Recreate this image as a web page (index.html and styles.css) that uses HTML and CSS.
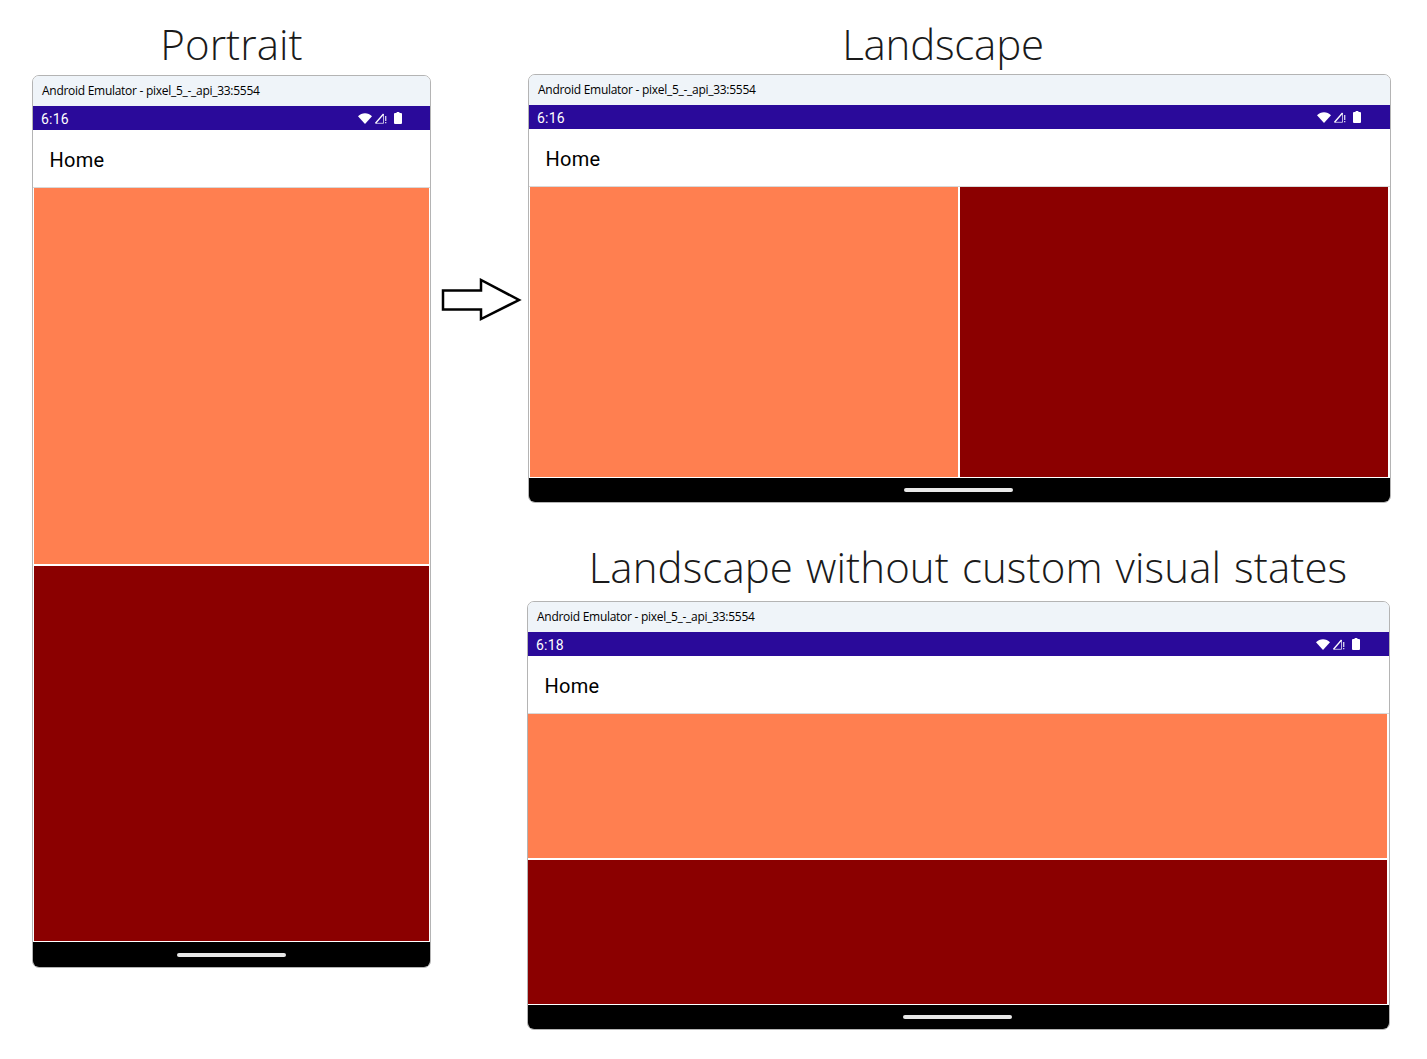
FILE: index.html
```html
<!DOCTYPE html>
<html lang="en">
<head>
    <meta charset="UTF-8">
    <title>Portrait and landscape layouts</title>
    <link rel="stylesheet" href="styles.css">
</head>
<body>

<svg class="icon-sprite" width="0" height="0">
    <symbol id="wifi" viewBox="0 0 14 11"><path d="M0 3.2C2 1.2 4.400.2 7 .2s5 1 7 3L7 11z" fill="#fff"/></symbol>
    <symbol id="signal" viewBox="0 0 12 12"><path d="M.5 11.200 8.500 2" fill="none" stroke="#fff" stroke-width="1.300"/><path d="M.5 11.300H8.500V2" fill="none" stroke="#fff" stroke-width=".7"/><path d="M10.200 4h1.100v5h-1.100zM10.200 10h1.100v1.300h-1.100z" fill="#fff"/></symbol>
    <symbol id="battery" viewBox="0 0 8 12"><path d="M2.600 0h2.800v1H7a1 1 0 0 1 1 1v9a1 1 0 0 1-1 1H1a1 1 0 0 1-1-1V2a1 1 0 0 1 1-1h1.600z" fill="#fff"/></symbol>
</svg>

<div class="page">
    <div class="column column-portrait">
        <h1 class="heading">Portrait</h1>
        <div class="window window-portrait">
            <div class="title-bar">Android Emulator - pixel_5_-_api_33:5554</div>
            <div class="status-bar">
                <span>6:16</span>
                <div class="status-icons">
                    <svg class="icon-wifi"><use href="#wifi"/></svg>
                    <svg class="icon-signal"><use href="#signal"/></svg>
                    <svg class="icon-battery"><use href="#battery"/></svg>
                </div>
            </div>
            <div class="app-bar">Home</div>
            <div class="content content-stacked">
                <div class="panel-orange"></div>
                <div class="panel-red"></div>
            </div>
            <div class="nav-bar"><div class="home-pill"></div></div>
        </div>
    </div>

    <svg class="arrow" width="82" height="44" viewBox="0 0 82 44">
        <path d="M2 12.500H40V2L78 22 40 41V31.500H2z" fill="#fff" stroke="#000" stroke-width="2.500"/>
    </svg>

    <div class="column column-landscape">
        <h1 class="heading heading-landscape">Landscape</h1>
        <div class="window window-landscape window-offset">
            <div class="title-bar">Android Emulator - pixel_5_-_api_33:5554</div>
            <div class="status-bar">
                <span>6:16</span>
                <div class="status-icons">
                    <svg class="icon-wifi"><use href="#wifi"/></svg>
                    <svg class="icon-signal"><use href="#signal"/></svg>
                    <svg class="icon-battery"><use href="#battery"/></svg>
                </div>
            </div>
            <div class="app-bar">Home</div>
            <div class="content content-split">
                <div class="panel-orange"></div>
                <div class="panel-red"></div>
            </div>
            <div class="nav-bar"><div class="home-pill"></div></div>
        </div>

        <h1 class="heading heading-plain">Landscape without custom visual states</h1>
        <div class="window window-landscape">
            <div class="title-bar">Android Emulator - pixel_5_-_api_33:5554</div>
            <div class="status-bar">
                <span>6:18</span>
                <div class="status-icons">
                    <svg class="icon-wifi"><use href="#wifi"/></svg>
                    <svg class="icon-signal"><use href="#signal"/></svg>
                    <svg class="icon-battery"><use href="#battery"/></svg>
                </div>
            </div>
            <div class="app-bar">Home</div>
            <div class="content content-stacked content-flush">
                <div class="panel-orange"></div>
                <div class="panel-red"></div>
            </div>
            <div class="nav-bar"><div class="home-pill"></div></div>
        </div>
    </div>
</div>

</body>
</html>
```

FILE: styles.css
```css
body {
    margin: 0;
    background-color: #fff;
    font-family: "Noto Sans", Arial, sans-serif;
    color: #000;
}
.icon-sprite {
    display: block;
}
.page {
    display: flex;
    align-items: flex-start;
    padding-left: 32px;
    height: 1059px;
    box-sizing: border-box;
}
.column {
    display: flex;
    flex-direction: column;
}
.column-portrait {
    width: 399px;
}
.column-landscape {
    width: 864px;
}
.heading {
    margin: 0;
    height: 75px;
    box-sizing: border-box;
    padding-top: 16px;
    font-family: "Open Sans", sans-serif;
    font-weight: 300;
    font-size: 42px;
    line-height: 56px;
    letter-spacing: .1px;
    word-spacing: 2px;
    text-align: center;
    color: #1a1a1a;
}
.heading-landscape {
    height: 74px;
    padding-right: 32px;
    padding-top: 16px;
    letter-spacing: -.2px;
}
.heading-plain {
    height: 98px;
    padding-top: 36px;
    padding-left: 18px;
}
.arrow {
    flex: none;
    margin: 278px 4px 0 10px;
}
.window {
    display: flex;
    flex-direction: column;
    box-sizing: border-box;
    border: 1px solid #b4b4b4;
    border-radius: 7px;
    overflow: hidden;
    background-color: #fff;
}
.window-portrait {
    height: 893px;
}
.window-landscape {
    width: 863px;
    height: 429px;
}
.window-offset {
    margin-left: 1px;
}
.title-bar {
    flex: none;
    height: 30px;
    padding-left: 9px;
    background-color: #eff4f9;
    font-family: "Open Sans", sans-serif;
    font-size: 12px;
    line-height: 30px;
    letter-spacing: -.28px;
}
.status-bar {
    flex: none;
    display: flex;
    justify-content: space-between;
    align-items: center;
    box-sizing: border-box;
    height: 24px;
    padding: 1px 28px 0 8px;
    background-color: #2a0a9a;
    color: #fff;
    font-family: Roboto, sans-serif;
    font-size: 14px;
    letter-spacing: .2px;
}
.window-landscape .status-bar {
    padding-right: 29px;
}
.status-icons {
    display: flex;
    align-items: center;
    gap: 3px;
    margin-top: -1px;
}
.icon-wifi {
    width: 14px;
    height: 11px;
}
.icon-signal {
    width: 12px;
    height: 12px;
}
.icon-battery {
    width: 8px;
    height: 12px;
    margin-left: 4px;
}
.app-bar {
    flex: none;
    height: 58px;
    padding-left: 16.500px;
    border-bottom: 1px solid #d8d8d8;
    box-sizing: border-box;
    font-family: Roboto, sans-serif;
    font-size: 20px;
    font-weight: 450;
    letter-spacing: .25px;
    line-height: 61px;
}
.content {
    flex: 1;
    display: grid;
    gap: 2px;
    padding: 0 1px 1px;
    min-height: 0;
}
.content-stacked {
    grid-template-rows: 1fr 1fr;
}
.content-split {
    grid-template-columns: 1fr 1fr;
    padding-right: 2px;
}
.content-flush {
    padding-left: 0;
    padding-right: 2px;
}
.panel-orange {
    background-color: #ff7f50;
}
.panel-red {
    background-color: #8b0000;
}
.nav-bar {
    flex: none;
    display: flex;
    justify-content: center;
    align-items: center;
    height: 24px;
    background-color: #000;
}
.window-portrait .nav-bar {
    height: 25px;
}
.window-landscape .home-pill {
    margin-right: 2px;
}
.home-pill {
    width: 109px;
    height: 4px;
    border-radius: 2px;
    background-color: #e8e8e8;
}
```
